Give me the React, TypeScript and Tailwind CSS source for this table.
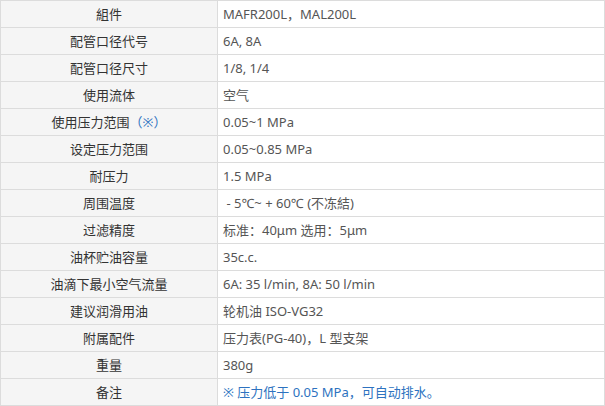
import React from 'react';

interface SpecRow {
    label: React.ReactNode;
    value: React.ReactNode;
}

const rows: SpecRow[] = [
    { label: '組件', value: 'MAFR200L，MAL200L' },
    { label: '配管口径代号', value: '6A, 8A' },
    { label: '配管口径尺寸', value: '1/8, 1/4' },
    { label: '使用流体', value: '空气' },
    {
        label: (
            <>
                使用压力范围<span className="text-[#2d72c0]">（※）</span>
            </>
        ),
        value: '0.05~1 MPa',
    },
    { label: '设定压力范围', value: '0.05~0.85 MPa' },
    { label: '耐压力', value: '1.5 MPa' },
    { label: '周围温度', value: '\u00a0- 5℃~ + 60℃ (不冻結)' },
    { label: '过滤精度', value: '标准：40μm 选用：5μm' },
    { label: '油杯贮油容量', value: '35c.c.' },
    { label: '油滴下最小空气流量', value: '6A: 35 l/min, 8A: 50 l/min' },
    { label: '建议润滑用油', value: '轮机油 ISO-VG32' },
    { label: '附属配件', value: '压力表(PG-40)，L 型支架' },
    { label: '重量', value: '380g' },
    {
        label: '备注',
        value: <span className="text-[#2d72c0]">※ 压力低于 0.05 MPa，可自动排水。</span>,
    },
];

const App: React.FC = () => {
    return (
        <div
            className="w-[605px] h-[406px] bg-white text-[13px] text-[#333]"
            style={{ fontFamily: '"Noto Sans", "Noto Sans CJK SC", sans-serif' }}
        >
            <table className="w-full border-collapse border border-[#dcdcdc]">
                <tbody>
                    {rows.map((row, i) => (
                        <tr key={i} className="h-[27px]">
                            <td className="w-[217px] border border-[#dcdcdc] bg-[#f5f5f5] text-center p-0 leading-[26px]">
                                {row.label}
                            </td>
                            <td className="border border-[#dcdcdc] pl-[5px] p-0 leading-[26px] text-[#555]">
                                {row.value}
                            </td>
                        </tr>
                    ))}
                </tbody>
            </table>
        </div>
    );
};

export default App;
